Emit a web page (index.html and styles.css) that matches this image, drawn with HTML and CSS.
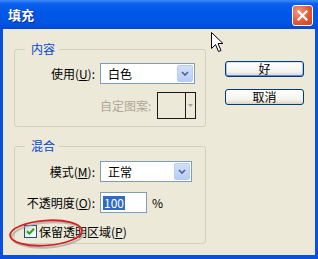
FILE: index.html
```html
<!DOCTYPE html>
<html lang="zh-CN">
<head>
    <meta charset="UTF-8">
    <title>填充</title>
    <link rel="stylesheet" href="styles.css">
</head>
<body>
    <div class="window">
        <div class="titlebar">
            <span class="title">填充</span>
            <span class="close">
                <svg width="11" height="11" viewBox="0 0 11 11"><path d="M1.5 1.5 L9.5 9.5 M9.5 1.5 L1.5 9.5" stroke="#fff" stroke-width="2.2" stroke-linecap="square"/></svg>
            </span>
        </div>

        <div class="content">
            <div class="groups">
                <fieldset class="group">
                    <legend>内容</legend>
                    <div class="row">
                        <label class="lbl">使用(<u>U</u>):</label>
                        <div class="combo combo-use">
                            <span class="combo-text">白色</span>
                            <span class="combo-btn">
                                <svg width="8" height="5" viewBox="0 0 8 5"><path d="M1 1 L4 4 L7 1" fill="none" stroke="#4D6185" stroke-width="1.6"/></svg>
                            </span>
                        </div>
                    </div>
                    <div class="row row-pattern">
                        <span></span>
                        <div class="pattern-field">
                            <span class="disabled">自定图案:</span>
                            <div class="pattern">
                                <span class="swatch"></span>
                                <span class="pattern-btn">
                                    <svg width="5" height="3" viewBox="0 0 5 3"><path d="M0 0 L5 0 L2.5 3 Z" fill="#A7A6A0"/></svg>
                                </span>
                            </div>
                        </div>
                    </div>
                </fieldset>

                <fieldset class="group group-blend">
                    <legend>混合</legend>
                    <div class="row">
                        <label class="lbl">模式(<u>M</u>):</label>
                        <div class="combo combo-mode">
                            <span class="combo-text">正常</span>
                            <span class="combo-btn">
                                <svg width="8" height="5" viewBox="0 0 8 5"><path d="M1 1 L4 4 L7 1" fill="none" stroke="#4D6185" stroke-width="1.6"/></svg>
                            </span>
                        </div>
                    </div>
                    <div class="row row-opacity">
                        <label class="lbl">不透明度(<u>O</u>):</label>
                        <div class="opacity">
                            <div class="textbox"><span class="selected">100</span></div>
                            <span class="unit">%</span>
                        </div>
                    </div>
                    <div class="check-row">
                        <span class="checkbox">
                            <svg width="9" height="9" viewBox="0 0 9 9"><path d="M1 4.2 L3.4 6.6 L8 1.8" fill="none" stroke="#21A121" stroke-width="2"/></svg>
                        </span>
                        <span>保留透明区域(<u>P</u>)</span>
                    </div>
                </fieldset>
            </div>

            <div class="buttons">
                <button class="btn btn-default">好</button>
                <button class="btn">取消</button>
            </div>
        </div>

        <!-- mouse pointer -->
        <svg class="cursor" width="13" height="21" viewBox="0 0 13 21">
            <path d="M0.5 0.5 L0.5 16.5 L4.5 12.5 L7.5 19.5 L10 18.5 L7 11.5 L12 11.5 Z" fill="#fff" stroke="#000" stroke-width="1"/>
        </svg>

        <!-- red annotation round the checkbox -->
        <svg class="mark" width="86" height="40" viewBox="0 0 86 40">
            <ellipse cx="42" cy="21" rx="36" ry="12.5" transform="rotate(-4 42 21)" fill="none" stroke="#9a9a9a" stroke-width="2" opacity="0.6"/>
            <ellipse cx="40" cy="19" rx="36" ry="12.5" transform="rotate(-4 40 19)" fill="none" stroke="#D61F1F" stroke-width="1.8"/>
        </svg>
    </div>
</body>
</html>
```

FILE: styles.css
```css
* {
    box-sizing: border-box;
}

body {
    margin: 0;
    background-color: #FFFFFF;
    font-family: "Noto Sans CJK SC", "Liberation Sans", sans-serif;
    font-size: 12px;
    line-height: 14px;
    color: #000000;
}

.window {
    position: relative;
    width: 318px;
    height: 259px;
    display: flex;
    flex-direction: column;
    background-color: #0A50DF; /* xp frame blue */
}

.titlebar {
    flex: none;
    height: 29px;
    display: flex;
    align-items: center;
    justify-content: space-between;
    padding: 1px 5px 0 8px;
    background: linear-gradient(#3A8AF7 0, #0B5EEC 4px, #0057E7 12px, #0055E4 22px, #0049D3 29px);
}

.title {
    color: #FFFFFF;
    font-weight: bold;
    font-size: 13px;
    text-shadow: 1px 1px 0 #0A2A8E;
}

.close {
    width: 21px;
    height: 21px;
    display: flex;
    align-items: center;
    justify-content: center;
    border: 1px solid #FFFFFF;
    border-radius: 3px;
    background: radial-gradient(circle at 30% 30%, #F09A7C 0, #E2583A 55%, #C9421F 100%);
}

.content {
    flex: 1;
    display: flex;
    margin: 0 3px 4px 3px;
    padding: 13px 0 0 11px;
    background-color: #ECE9D8;
}

.groups {
    width: 192px;
    display: flex;
    flex-direction: column;
}

.group {
    margin: 0;
    padding: 7px 0 7px 0;
    min-width: 0;
    border: 1px solid #D0D0BF;
    border-radius: 3px;
}

.group legend {
    margin-left: 10px;
    padding: 0 4px 0 6px;
    color: #0046D5;
}

.group-blend {
    margin-top: 12px;
    padding-top: 8px;
    padding-bottom: 5px;
}

.row {
    display: grid;
    grid-template-columns: 80px auto;
    column-gap: 5px;
    align-items: center;
}

.lbl {
    text-align: right;
    white-space: nowrap;
}

.combo {
    height: 21px;
    display: flex;
    align-items: center;
    justify-content: space-between;
    padding: 0 1px 0 7px;
    border: 1px solid #7F9DB9;
    background-color: #FFFFFF;
}

.combo-use {
    width: 95px;
}

.combo-mode {
    width: 92px;
}

.combo-btn {
    width: 16px;
    height: 17px;
    display: flex;
    align-items: center;
    justify-content: center;
    border: 1px solid #B9CCF6;
    border-radius: 2px;
    background: linear-gradient(#D1DFFD, #B8CCF8);
}

.row-pattern {
    margin-top: 8px;
}

.pattern-field {
    display: flex;
    align-items: center;
    gap: 6px;
}

.disabled {
    color: #ACA899;
}

.pattern {
    width: 39px;
    height: 27px;
    display: flex;
    border: 1px solid #1A1A1A;
}

.swatch {
    flex: 1;
    background-color: #ECE9D8;
}

.pattern-btn {
    width: 10px;
    display: flex;
    align-items: center;
    justify-content: center;
    border-left: 1px solid #1A1A1A;
}

.row-opacity {
    margin-top: 10px;
}

.opacity {
    display: flex;
    align-items: center;
    gap: 5px;
}

.textbox {
    width: 47px;
    height: 21px;
    display: flex;
    align-items: center;
    padding-left: 2px;
    border: 1px solid #7F9DB9;
    background-color: #FFFFFF;
}

.selected {
    background-color: #316AC5;
    color: #FFFFFF;
    padding: 0 1px;
}

.check-row {
    display: flex;
    align-items: center;
    gap: 2px;
    height: 13px;
    margin: 12px 0 0 9px;
}

.checkbox {
    width: 13px;
    height: 13px;
    display: flex;
    align-items: center;
    justify-content: center;
    border: 1px solid #1C5180;
    background: linear-gradient(135deg, #DCDCD7, #FFFFFF);
}

.buttons {
    display: flex;
    flex-direction: column;
    gap: 12px;
    margin: 19px 0 0 19px;
}

.btn {
    width: 79px;
    height: 16px;
    padding: 0;
    font-family: inherit;
    font-size: 12px;
    line-height: 14px;
    color: #000000;
    border: 1px solid #003C74;
    border-radius: 3px;
    background: linear-gradient(#FFFFFF, #F3F2EC 70%, #D8D4C6);
}

.btn-default {
    box-shadow: inset 0 1px 0 #CEE7FF, inset 0 -1px 0 #6982EE, inset 1px 0 0 #A9C6F8, inset -1px 0 0 #A9C6F8;
}

.cursor {
    position: absolute;
    left: 211px;
    top: 32px;
}

.mark {
    position: absolute;
    left: 6px;
    top: 214px;
}
```
